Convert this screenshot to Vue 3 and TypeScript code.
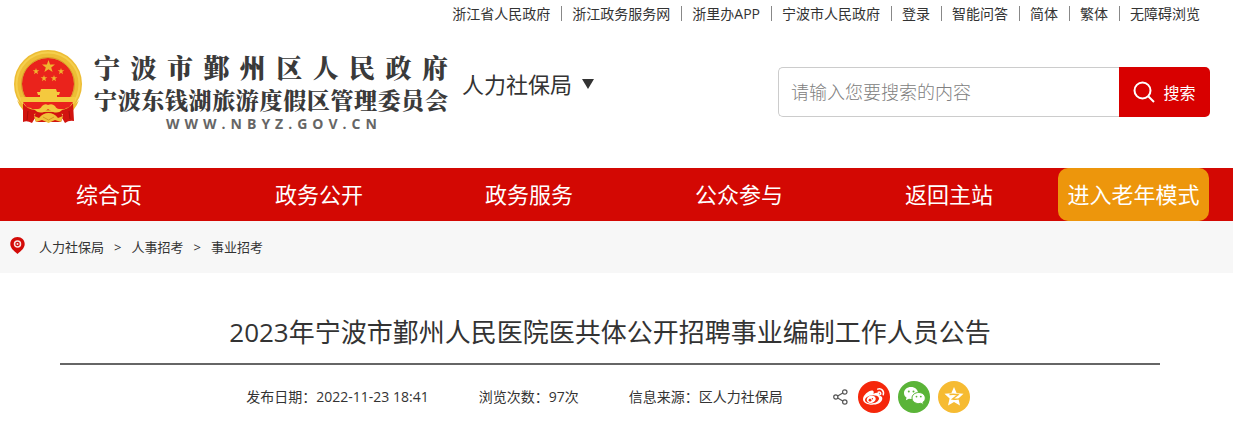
<script setup lang="ts">
import { ref } from 'vue'

const topLinks: string[] = [
  '浙江省人民政府', '浙江政务服务网', '浙里办APP', '宁波市人民政府',
  '登录', '智能问答', '简体', '繁体', '无障碍浏览',
]
const navLinks: string[] = ['综合页', '政务公开', '政务服务', '公众参与', '返回主站']
const crumbs: string[] = ['人力社保局', '人事招考', '事业招考']
const keyword = ref('')
</script>

<template>
  <div class="page">
    <nav class="topbar" aria-label="快捷链接">
      <a v-for="link in topLinks" :key="link" href="#">{{ link }}</a>
    </nav>

    <header class="header">
      <a class="brand" href="#">
        <svg class="emblem" viewBox="0 0 68 74" aria-hidden="true">
          <circle cx="34" cy="34" r="30" fill="#ea231c" stroke="#edbd35" stroke-width="8" />
          <circle cx="34" cy="34" r="31.500" fill="none" stroke="#f5cf4d" stroke-width="2" />
          <circle cx="34" cy="34" r="26.500" fill="none" stroke="#d9992a" stroke-width="1" />
          <g fill="#efb52f">
            <path d="M34.500 10 L36.100 14.600 H41 L37.200 17.500 L38.600 22 L34.500 19.200 L30.400 22 L31.800 17.500 L28 14.600 H32.900Z" />
            <path id="small-star" d="M22 18 L22.800 20.300 H25.300 L23.300 21.800 L24 24.200 L22 22.700 L20 24.200 L20.700 21.800 L18.700 20.300 H21.200Z" />
            <use href="#small-star" x="25" />
            <use href="#small-star" x="8" y="7" />
            <use href="#small-star" x="18" y="7" />
          </g>
          <path d="M27 39 H42 L43 42 H46 L45 45 H43 V47 H61 V52 H7 V47 H26 V45 H24 L23 42 H26Z" fill="#f4c93e" />
          <path d="M9 52 H59 L54 59 H14Z" fill="#ea231c" />
          <path d="M3 50 Q9 57 17 58 L21 62 H48 L52 58 Q59 57 65 50 Q61 62 52 64 H17 Q7 62 3 50Z" fill="#edbd35" />
          <path d="M9 53 Q13 60 22 60 L26 63 L20 64 L21 68 L18 73 Q13 70 9 72Z" fill="#d2130f" />
          <path d="M59 53 Q55 60 46 60 L42 63 L49 64 L48 68 L51 73 Q55 70 60 71Z" fill="#d2130f" />
          <path d="M23 62 H46 L49 66 L47 72 H22 L20 66Z" fill="#d2130f" />
          <path d="M20 59 Q26 60 28 56 Q31 53 34 55 Q38 53 41 56 Q43 60 49 59 Q45 64 39 62 L34 59 L30 62 Q24 64 20 59Z" fill="#f4c93e" />
          <path d="M20 66 L25 68 Q29 63 34.500 63 Q40 63 44 68 L49 66 L47 72 L41 70 L34.500 73 L28 70 L22 72Z" fill="#f1c13a" />
          <path d="M29 67 L34.500 70 L40 67" fill="none" stroke="#d79422" stroke-width="1" />
          <path d="M14 61 L13 70 M55 61 L56 69" stroke="#a90d0b" stroke-width="1" />
        </svg>
        <span class="brand-text">
          <span class="brand-main">宁波市鄞州区人民政府</span>
          <span class="brand-sub">宁波东钱湖旅游度假区管理委员会</span>
          <span class="brand-url">WWW.NBYZ.GOV.CN</span>
        </span>
      </a>
      <button class="dept" type="button">
        人力社保局
        <svg width="12" height="10" viewBox="0 0 12 10" aria-hidden="true"><path d="M0 0H12L6 10Z" fill="#333" /></svg>
      </button>
      <form class="search" role="search" @submit.prevent>
        <input v-model="keyword" type="text" aria-label="搜索内容" placeholder="请输入您要搜索的内容" />
        <button type="submit">
          <svg width="22" height="22" viewBox="0 0 22 22" fill="none" stroke="#fff" stroke-width="2" aria-hidden="true">
            <circle cx="9.500" cy="9.500" r="8" />
            <path d="M15.500 15.500 L21 21" />
          </svg>
          搜索
        </button>
      </form>
    </header>

    <nav class="mainnav" aria-label="主导航">
      <a v-for="link in navLinks" :key="link" class="nav-link" href="#">{{ link }}</a>
      <a class="senior" href="#">进入老年模式</a>
    </nav>

    <nav class="crumbs" aria-label="当前位置">
      <svg class="pin" width="15" height="17" viewBox="0 0 15 17" aria-hidden="true">
        <path d="M7.500 0 C3.300 0 0.300 3 0.300 7 C0.300 11 4 14 7.500 17 C11 14 14.700 11 14.700 7 C14.700 3 11.700 0 7.500 0Z" fill="#d30b08" />
        <circle cx="7.500" cy="7" r="3" fill="#d30b08" stroke="#f8e5e4" stroke-width="1.500" />
        <circle cx="7.500" cy="7" r="1" fill="#f8e5e4" />
      </svg>
      <template v-for="(crumb, i) in crumbs" :key="crumb">
        <span v-if="i > 0">&gt;</span>
        <a href="#">{{ crumb }}</a>
      </template>
    </nav>

    <main class="article">
      <h1>2023年宁波市鄞州人民医院医共体公开招聘事业编制工作人员公告</h1>
      <div class="meta">
        <span>发布日期：2022-11-23 18:41</span>
        <span>浏览次数：97次</span>
        <span>信息来源：区人力社保局</span>
        <div class="share">
          <svg class="share-mark" width="15" height="16" viewBox="0 0 15 16" fill="none" stroke="#555" stroke-width="1.200" aria-hidden="true">
            <circle cx="2.800" cy="8" r="2.100" />
            <circle cx="11.800" cy="3" r="2.200" />
            <circle cx="11.800" cy="13" r="2.200" />
            <path d="M4.700 7 L9.800 4.100 M4.700 9 L9.800 11.900" />
          </svg>
          <a href="#" aria-label="分享到微博">
            <svg width="32" height="32" viewBox="0 0 32 32" aria-hidden="true">
              <circle cx="16" cy="16" r="16" fill="#f5270b" />
              <path d="M5 18.200 C5 13.500 12.500 8.200 15 9.800 C16.200 10.600 15.700 11.900 15.400 12.800 C18.500 11.400 22.800 11.200 21.700 14.800 C23.800 15.300 24.700 16.400 24.200 18.500 C23.200 22 18.800 23.700 14.200 23.700 C9.300 23.700 5 21.600 5 18.200Z" fill="#fff" />
              <ellipse cx="14" cy="18.300" rx="7.100" ry="4" transform="rotate(-8 14 18.300)" fill="#f5270b" />
              <ellipse cx="13.200" cy="18.300" rx="4.600" ry="3.600" transform="rotate(-16 13.200 18.300)" fill="#fff" />
              <circle cx="12" cy="19.200" r="1.400" fill="#f5270b" />
              <circle cx="14.400" cy="17.800" r="0.700" fill="#f5270b" />
              <path d="M19.700 8.100 C23.500 7 26.500 10 25.200 13.800 M20.300 11.200 C22.200 10.700 23.200 12 22.600 13.500" fill="none" stroke="#fff" stroke-width="1.500" stroke-linecap="round" />
            </svg>
          </a>
          <a href="#" aria-label="分享到微信">
            <svg width="32" height="32" viewBox="0 0 32 32" aria-hidden="true">
              <circle cx="16" cy="16" r="16" fill="#5ab438" />
              <path d="M13 6 C8.900 6 6 8.700 6 12 C6 14 7 15.600 8.500 16.600 L7.900 19.200 L10.900 17.700 L13 18 C17 18 20 15.400 20 12 C20 8.700 17 6 13 6Z" fill="#fff" />
              <path d="M20.700 11.500 C16.800 11.500 14 14 14 17 C14 20.200 16.900 22.600 20.700 22.600 L22.700 22.300 L25.500 23.700 L24.900 21.400 C26.400 20.300 27.300 18.900 27.300 17 C27.300 14 24.500 11.500 20.700 11.500Z" fill="#fff" stroke="#5ab438" stroke-width="1" />
              <g fill="#5ab438">
                <circle cx="10.800" cy="10.500" r="1" /><circle cx="15.500" cy="10.500" r="1" />
                <circle cx="18.500" cy="15.600" r="0.900" /><circle cx="22.800" cy="15.600" r="0.900" />
              </g>
            </svg>
          </a>
          <a href="#" aria-label="分享到QQ空间">
            <svg width="32" height="32" viewBox="0 0 32 32" aria-hidden="true">
              <circle cx="16" cy="16" r="16" fill="#f6bb32" />
              <path d="M16 6 L18.700 12.200 L25.500 12.800 L20.400 17.500 L22 24.500 L16 21 L10 24.500 L11.600 17.500 L6.500 12.800 L13.300 12.200Z" fill="#fff" />
              <path d="M11.500 13.500 Q16 12.800 20 13.800 L14.500 18 Q18 18.600 21 17.900" fill="none" stroke="#f6bb32" stroke-width="1.400" />
            </svg>
          </a>
        </div>
      </div>
    </main>
  </div>
</template>

<style>
body {
  margin: 0;
  background: #fff;
}
</style>

<style scoped>
.page,
.page input,
.page button {
  font-family: "Open Sans", "Noto Sans CJK SC", sans-serif;
  color: #333;
}
a {
  color: inherit;
  text-decoration: none;
}
svg {
  display: block;
  flex: none;
}
.topbar {
  display: flex;
  justify-content: flex-end;
  padding: 6px 22px 0 0;
  font-size: 14px;
  line-height: 15px;
  white-space: nowrap;
}
.topbar a {
  padding: 0 11px 0 10px;
}
.topbar a + a {
  border-left: 1px solid #888;
}
.header {
  display: flex;
  align-items: flex-start;
  padding: 29px 23px 36px 14px;
}
.brand {
  display: flex;
  gap: 12px;
}
.emblem {
  width: 68px;
  height: 74px;
}
.brand-text {
  display: flex;
  flex-direction: column;
  width: 354px;
  font-family: "Noto Serif CJK SC", "Noto Sans CJK SC", serif;
  font-weight: 900;
  color: #3a3a3a;
  white-space: nowrap;
}
.brand-main {
  font-size: 26px;
  line-height: 34px;
  text-align-last: justify;
}
.brand-sub {
  font-size: 23px;
  line-height: 32px;
  text-align-last: justify;
}
.brand-url {
  padding-left: 72px;
  font-family: "Open Sans", sans-serif;
  font-size: 14px;
  font-weight: 700;
  line-height: 16px;
  letter-spacing: 5px;
  color: #666;
}
.dept {
  display: flex;
  align-items: center;
  gap: 10px;
  margin: 18px 0 0 14px;
  padding: 0;
  border: 0;
  background: none;
  font-size: 22px;
  line-height: 32px;
  white-space: nowrap;
}
.search {
  display: flex;
  width: 432px;
  height: 50px;
  margin: 17px 0 0 auto;
}
.search input {
  flex: 1;
  min-width: 0;
  box-sizing: border-box;
  padding: 0 12px;
  border: 1px solid #ccc;
  border-right: 0;
  border-radius: 5px 0 0 5px;
  font-size: 18px;
  font-weight: 300;
  outline: 0;
}
.search input::placeholder {
  color: #808080;
  opacity: 1;
}
.search button {
  display: flex;
  align-items: center;
  justify-content: center;
  gap: 8px;
  width: 91px;
  padding: 0;
  border: 0;
  border-radius: 0 5px 5px 0;
  background: #d80000;
  color: #fff;
  font-size: 16px;
}
.mainnav {
  display: flex;
  padding: 0 24px 0 4px;
  background: #d30803;
  color: #fff;
  font-size: 22px;
  line-height: 53px;
  text-align: center;
  white-space: nowrap;
}
.nav-link {
  flex: 1;
}
.senior {
  width: 151px;
  margin-left: 4px;
  border-radius: 10px;
  background: #ed960c;
}
.crumbs {
  display: flex;
  align-items: center;
  gap: 10px;
  padding-left: 10px;
  background: #f7f7f7;
  font-size: 13px;
  line-height: 52px;
}
.pin {
  margin: 0 4px 4px 0;
}
.article {
  margin-right: 13px;
  padding: 0 60px;
}
h1 {
  margin: 0;
  padding: 39px 0 11px;
  border-bottom: 2px solid #666;
  font-size: 26px;
  font-weight: 400;
  line-height: 40px;
  text-align: center;
}
.meta {
  display: flex;
  align-items: center;
  justify-content: center;
  gap: 50px;
  padding: 16px 4px 0 0;
  font-size: 14px;
  line-height: 32px;
  white-space: nowrap;
}
.share {
  display: flex;
  align-items: center;
  gap: 8px;
}
.share-mark {
  margin-right: 2px;
}
</style>
